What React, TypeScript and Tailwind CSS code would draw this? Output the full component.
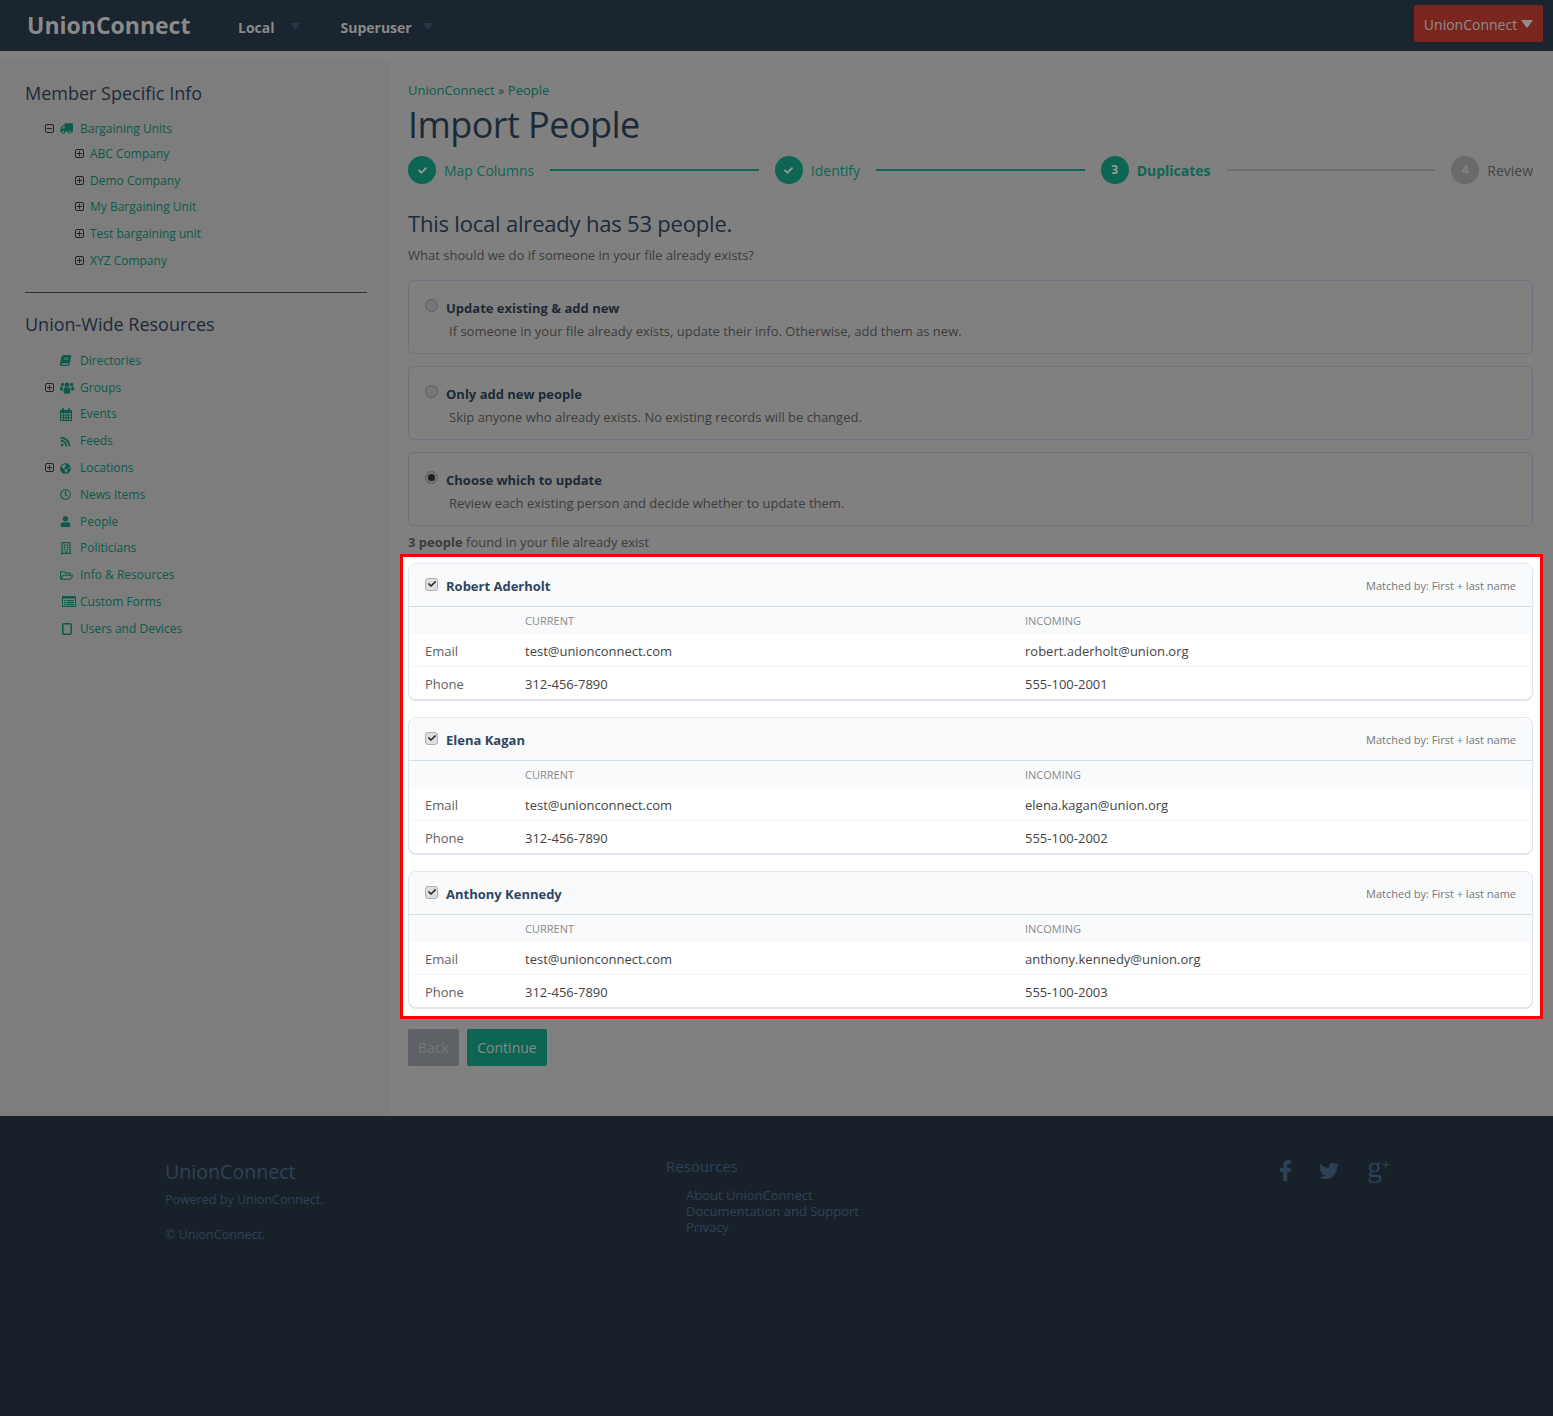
import React from "react";
import {
  FaBook,
  FaCheck,
  FaFacebookF,
  FaGlobeAmericas,
  FaRegBuilding,
  FaRegClock,
  FaRegFolderOpen,
  FaRss,
  FaTruck,
  FaTwitter,
  FaUser,
} from "react-icons/fa";

const TreeBox = ({ minus }: { minus?: boolean }) => (
  <svg width="9" height="9" viewBox="0 0 9 9" className="shrink-0 -mt-[1px]">
    <rect x="0.5" y="0.5" width="8" height="8" rx="1.5" fill="none" stroke="#222222" />
    <path d="M2 4.5h5" stroke="#222222" />
    {!minus && <path d="M4.5 2v5" stroke="#222222" />}
  </svg>
);

const GroupIcon = () => (
  <svg width="14" height="12" viewBox="0 0 14 12" fill="currentColor">
    <circle cx="7" cy="3" r="2.4" />
    <circle cx="2.4" cy="2.4" r="1.6" />
    <circle cx="11.6" cy="2.4" r="1.6" />
    <path d="M3.6 6.6C3.6 5.8 4.4 5.4 5 5.6c1.2.5 2.8.5 4 0 .6-.2 1.4.2 1.4 1V10c0 1-.8 1.8-1.8 1.8H5.4c-1 0-1.8-.8-1.8-1.8z" />
    <path d="M0 5.4c0-.6.5-1 1-.8.6.2 1.2.2 1.8 0-.2.4-.2.9-.2 1.4v2.4H1c-.6 0-1-.4-1-1zM14 5.4c0-.6-.5-1-1-.8-.6.2-1.2.2-1.8 0 .2.4.2.9.2 1.4v2.4H13c.6 0 1-.4 1-1z" />
  </svg>
);

const CalendarIcon = () => (
  <svg width="12" height="13" viewBox="0 0 12 13" fill="currentColor">
    <rect x="2" y="0" width="2" height="3" rx="1" />
    <rect x="8" y="0" width="2" height="3" rx="1" />
    <path
      fillRule="evenodd"
      d="M0 2h12v11H0zM1 5v1.7h2V5zm3 0v1.7h1.6V5zm2.6 0v1.7H8V5zM9 5v1.7h2V5zM1 7.6v1.7h2V7.6zm3 0v1.7h1.6V7.6zm2.6 0v1.7H8V7.6zm2.4 0v1.7h2V7.6zM1 10.2V12h2v-1.8zm3 0V12h1.6v-1.8zm2.6 0V12H8v-1.8zm2.4 0V12h2v-1.8z"
    />
  </svg>
);

const FormsIcon = () => (
  <svg width="14" height="11" viewBox="0 0 14 11" fill="currentColor">
    <path
      fillRule="evenodd"
      d="M1 0h12c.6 0 1 .4 1 1v9c0 .6-.4 1-1 1H1c-.6 0-1-.4-1-1V1c0-.6.4-1 1-1zm0 2.5V10h12V2.5z"
    />
    <rect x="2" y="4" width="1.6" height="1.2" />
    <rect x="2" y="6" width="1.6" height="1.2" />
    <rect x="2" y="8" width="1.6" height="1.2" />
    <rect x="4.5" y="4" width="7.5" height="1.2" />
    <rect x="4.5" y="6" width="7.5" height="1.2" />
    <rect x="4.5" y="8" width="7.5" height="1.2" />
  </svg>
);

const TabletIcon = () => (
  <svg width="10" height="12" viewBox="0 0 10 12" fill="none" stroke="currentColor" strokeWidth="1.5">
    <rect x="0.75" y="0.75" width="8.5" height="10.5" rx="1.2" />
  </svg>
);

const resources = [
  { label: "Directories", icon: <FaBook size={11} className="-skew-x-12" /> },
  { label: "Groups", icon: <GroupIcon />, tree: true },
  { label: "Events", icon: <CalendarIcon /> },
  { label: "Feeds", icon: <FaRss size={11} /> },
  { label: "Locations", icon: <FaGlobeAmericas size={11} />, tree: true },
  { label: "News Items", icon: <FaRegClock size={11} /> },
  { label: "People", icon: <FaUser size={11} /> },
  { label: "Politicians", icon: <FaRegBuilding size={12} /> },
  { label: "Info & Resources", icon: <FaRegFolderOpen size={13} /> },
  { label: "Custom Forms", icon: <FormsIcon />, shift: true },
  { label: "Users and Devices", icon: <TabletIcon />, shift: true },
];

const units = ["ABC Company", "Demo Company", "My Bargaining Unit", "Test bargaining unit", "XYZ Company"];

const Sidebar = () => (
  <aside className="w-[389px] shrink-0 mt-[10px] pl-[25px] pr-[21px] pt-[19px] bg-[#7d7d7d] border-r border-[#797979]">
    <h3 className="text-[18px] leading-[26px] text-[#1c2a38]">Member Specific Info</h3>
    <ul className="mt-[10.6px] text-[12px] text-[#0c5a49]">
      <li className="h-[24px] flex items-center pl-[20px]">
        <TreeBox minus />
        <span className="w-[15px] ml-[6px] flex justify-end -scale-x-100"><FaTruck size={13} /></span>
        <span className="ml-[5px]">Bargaining Units</span>
      </li>
      {units.map((u) => (
        <li key={u} className="h-[26.75px] flex items-center pl-[50px]">
          <TreeBox />
          <span className="ml-[6px]">{u}</span>
        </li>
      ))}
    </ul>
    <hr className="mt-[17.4px] border-t border-[#2f2f2f]" />
    <h3 className="mt-[18px] text-[18px] leading-[26px] text-[#1c2a38]">Union-Wide Resources</h3>
    <ul className="mt-[10.7px] text-[12px] text-[#0c5a49]">
      {resources.map((r) => (
        <li key={r.label} className="h-[26.8px] flex items-center pl-[20px]">
          <span className="w-[9px] flex">{r.tree && <TreeBox />}</span>
          <span className={r.shift ? "w-[20px] ml-[6px] pl-[2px] flex items-center" : "w-[20px] ml-[6px] flex items-center"}>
            {r.icon}
          </span>
          <span>{r.label}</span>
        </li>
      ))}
    </ul>
  </aside>
);

const Step = ({ n, label, state }: { n: string; label: string; state: "done" | "active" | "todo" }) => (
  <div className="flex items-center shrink-0">
    <span
      className={
        state === "todo"
          ? "w-[28px] h-[28px] rounded-full flex items-center justify-center text-[12px] font-bold bg-[#6a6a6a] text-[#828282]"
          : "w-[28px] h-[28px] rounded-full flex items-center justify-center text-[12px] font-bold bg-[#0e6553] text-[#9a9a9a]"
      }
    >
      {state === "done" ? <FaCheck size={9} /> : n}
    </span>
    <span
      className={
        state === "todo"
          ? "ml-[8px] text-[14px] text-[#444444]"
          : state === "active"
            ? "ml-[8px] text-[14px] font-bold text-[#0e6553]"
            : "ml-[8px] text-[14px] text-[#0e6553]"
      }
    >
      {label}
    </span>
  </div>
);

const Option = ({ title, body, on }: { title: string; body: string; on?: boolean }) => (
  <div className="h-[74px] mb-[12px] rounded-[5px] border border-[#6b7480] pl-[16px] pt-[19px]">
    <div className="flex items-center h-[18px]">
      <span className="relative -top-[4px] w-[13px] h-[13px] rounded-full border border-[#5f5f5f] bg-[#767676] flex items-center justify-center">
        {on && <span className="w-[7px] h-[7px] rounded-full bg-[#1d1d1d]" />}
      </span>
      <span className="ml-[8px] text-[13px] font-bold text-[#1c2a38]">{title}</span>
    </div>
    <p className="mt-[4px] ml-[24px] text-[13px] text-[#3c3c3c]">{body}</p>
  </div>
);

const people = [
  { name: "Robert Aderholt", email: "robert.aderholt@union.org", phone: "555-100-2001" },
  { name: "Elena Kagan", email: "elena.kagan@union.org", phone: "555-100-2002" },
  { name: "Anthony Kennedy", email: "anthony.kennedy@union.org", phone: "555-100-2003" },
];

const PersonCard = ({ p }: { p: (typeof people)[number] }) => (
  <div className="rounded-[8px] border border-[#dfe6f0] shadow-[0_1px_0_#dfe4ec] overflow-hidden bg-white">
    <div className="h-[43px] flex items-center pl-[16px] pr-[16px] bg-[#f8fafc] border-b border-[#cfdcea]">
      <span className="-mt-[2px] w-[13px] h-[13px] rounded-[3px] border border-[#b0b0b0] bg-[#dedede] flex items-center justify-center text-[#1f1f1f]">
        <FaCheck size={8} />
      </span>
      <span className="ml-[8px] mt-[3px] text-[13px] font-bold text-[#2f4560]">{p.name}</span>
      <span className="ml-auto mt-[2px] text-[11px] text-[#777777]">Matched by: First + last name</span>
    </div>
    <div className="h-[27px] pt-[2px] grid grid-cols-[100px_500px_1fr] pl-[16px] items-center bg-[#f8fafc] text-[11px] text-[#8a8a8a]">
      <span />
      <span>CURRENT</span>
      <span>INCOMING</span>
    </div>
    <div className="h-[33px] pt-[3px] grid grid-cols-[100px_500px_1fr] pl-[16px] items-center border-b border-[#f3f5f8] text-[13px] text-[#444444]">
      <span className="text-[#5f5f5f]">Email</span>
      <span>test@unionconnect.com</span>
      <span>{p.email}</span>
    </div>
    <div className="h-[32px] pt-[3px] grid grid-cols-[100px_500px_1fr] pl-[16px] items-center text-[13px] text-[#444444]">
      <span className="text-[#5f5f5f]">Phone</span>
      <span>312-456-7890</span>
      <span>{p.phone}</span>
    </div>
  </div>
);

const Footer = () => (
  <footer className="h-[300px] bg-[#18202a] text-[#2f4255] flex pl-[165px] pt-[42px] pr-[164px]">
    <div className="w-[501px]">
      <div className="text-[19.6px] leading-[28px]">UnionConnect</div>
      <div className="mt-[5px] text-[12.5px] leading-[18px]">Powered by UnionConnect.</div>
      <div className="mt-[17px] text-[12.5px] leading-[18px]">© UnionConnect.</div>
    </div>
    <div className="flex-1 -mt-[4px]">
      <div className="text-[15px] leading-[24px]">Resources</div>
      <ul className="mt-[9px] ml-[20px] text-[13px] leading-[16px]">
        <li>About UnionConnect</li>
        <li>Documentation and Support</li>
        <li>Privacy</li>
      </ul>
    </div>
    <div className="flex items-start text-[#2c4156]">
      <FaFacebookF size={21} className="mt-[2px]" />
      <FaTwitter size={20} className="ml-[23px] mt-[3px]" />
      <span className="ml-[28px] w-[22px] flex items-start font-['Liberation_Serif',serif] leading-none">
        <span className="text-[30px] -mt-[6px]">g</span>
        <span className="text-[17px] font-bold -mt-[1px] -ml-[1px]">+</span>
      </span>
    </div>
  </footer>
);

export default function App() {
  return (
    <div className="w-[1553px] min-h-[1416px] bg-[#808080] font-['Open_Sans',sans-serif] flex flex-col">
      <header className="h-[51px] bg-[#1a2530] flex items-center pl-[27px] pr-[10px] text-[#8a8a8a]">
        <span className="text-[23px] font-bold w-[211px]">UnionConnect</span>
        <span className="text-[14px] font-bold mt-[4px]">Local</span>
        <span className="ml-[15px] mt-[2px] w-0 h-0 border-x-[5px] border-x-transparent border-t-[7px] border-t-[#26374a]" />
        <span className="ml-[41px] text-[14px] font-bold mt-[4px]">Superuser</span>
        <span className="ml-[11px] mt-[2px] w-0 h-0 border-x-[5px] border-x-transparent border-t-[7px] border-t-[#26374a]" />
        <button className="ml-auto mb-[4px] pt-[1px] h-[37px] w-[129px] rounded-[2px] bg-[#7a261e] text-[14px] text-[#8f8f8f] flex items-center justify-center">
          UnionConnect
          <span className="ml-[4px] w-0 h-0 border-x-[6px] border-x-transparent border-t-[8px] border-t-[#8f8f8f]" />
        </button>
      </header>

      <div className="flex h-[1065px]">
        <Sidebar />
        <main className="flex-1 pl-[19px] pr-[20px] pt-[30px]">
          <div className="text-[13px] leading-[18px] text-[#3c3c3c]">
            <span className="text-[#0c5a49]">UnionConnect</span> » <span className="text-[#0c5a49]">People</span>
          </div>
          <h1 className="mt-[1px] text-[36px] leading-[50px] text-[#1c2a38] tracking-[-0.55px]">Import People</h1>
          <div className="mt-[6px] flex items-center gap-[16px]">
            <Step n="1" label="Map Columns" state="done" />
            <span className="flex-1 h-[2px] bg-[#0e6553]" />
            <Step n="2" label="Identify" state="done" />
            <span className="flex-1 h-[2px] bg-[#0e6553]" />
            <Step n="3" label="Duplicates" state="active" />
            <span className="flex-1 h-[2px] bg-[#6f6f6f]" />
            <Step n="4" label="Review" state="todo" />
          </div>
          <h2 className="mt-[22px] text-[22px] leading-[34px] text-[#1c2a38] tracking-[-0.2px]">This local already has 53 people.</h2>
          <p className="mt-[5px] text-[13px] leading-[20px] text-[#3c3c3c]">What should we do if someone in your file already exists?</p>

          <div className="mt-[15px]">
            <Option title="Update existing & add new" body="If someone in your file already exists, update their info. Otherwise, add them as new." />
            <Option title="Only add new people" body="Skip anyone who already exists. No existing records will be changed." />
            <Option on title="Choose which to update" body="Review each existing person and decide whether to update them." />
          </div>

          <p className="-mt-[6px] text-[13px] leading-[20px] text-[#3c3c3c]">
            <b>3 people</b> found in your file already exist
          </p>

          <div className="mt-[2px] -ml-[8px] -mr-[10px] border-[3px] border-[#ff0000] bg-white pt-[6px] pb-[8px] pl-[5px] pr-[7px] flex flex-col gap-[17px]">
            {people.map((p) => (
              <PersonCard key={p.name} p={p} />
            ))}
          </div>

          <div className="mt-[10px] flex gap-[8px]">
            <button className="h-[37px] w-[51px] rounded-[2px] bg-[#5e6266] text-[14px] text-[#777777]">Back</button>
            <button className="h-[37px] w-[80px] rounded-[2px] bg-[#0e6553] text-[14px] text-[#8a8a8a]">Continue</button>
          </div>
        </main>
      </div>

      <Footer />
    </div>
  );
}
